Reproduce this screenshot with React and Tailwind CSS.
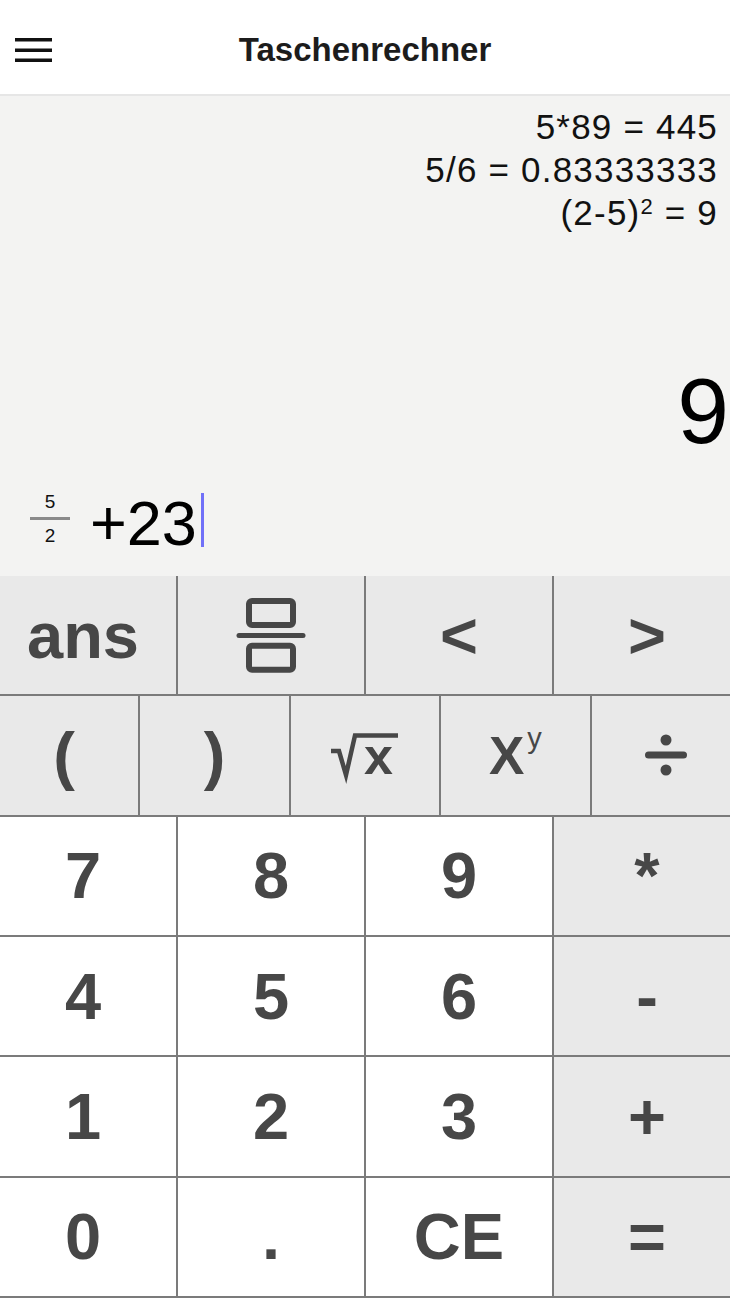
const font = "font-['Liberation_Sans',Arial,sans-serif]";

function Hamburger() {
  return (
    <svg width="37" height="24" viewBox="0 0 37 24">
      <rect x="0" y="0" width="37" height="3.5" fill="#111" />
      <rect x="0" y="10.5" width="37" height="3.5" fill="#111" />
      <rect x="0" y="20.5" width="37" height="3.5" fill="#111" />
    </svg>
  );
}

function FractionIcon() {
  return (
    <svg width="70" height="75" viewBox="0 0 70 75" fill="none" stroke="#474747">
      <rect x="13" y="3" width="44" height="24" rx="3" strokeWidth="6" />
      <line x1="3" y1="37.5" x2="67" y2="37.5" strokeWidth="5" strokeLinecap="round" />
      <rect x="13" y="47.7" width="44" height="24" rx="3" strokeWidth="6" />
    </svg>
  );
}

function SqrtIcon() {
  return (
    <svg width="68" height="60" viewBox="0 -8 68 60">
      <path d="M0 18 L8 18 L15 42 L24 2.5 L67 2.5" fill="none" stroke="#474747" strokeWidth="4.5" strokeLinejoin="miter" />
      <text x="33" y="41" fontSize="52" fontWeight="700" fill="#474747" fontFamily="Liberation Sans, Arial, sans-serif">
        x
      </text>
    </svg>
  );
}

function DivideIcon() {
  return (
    <svg width="42" height="42" viewBox="0 0 42 42" fill="#474747">
      <circle cx="21" cy="6" r="5.5" />
      <rect x="0" y="17.5" width="42" height="7" rx="3.5" />
      <circle cx="21" cy="36" r="5.5" />
    </svg>
  );
}

function Key({ children, gray }) {
  return (
    <div
      className={`flex items-center justify-center border-r-2 border-[#7b7b7b] text-[65px] font-bold leading-none text-[#474747] ${
        gray ? "bg-[#e9e9e9]" : "bg-white"
      }`}
    >
      {children}
    </div>
  );
}

export default function App() {
  return (
    <div className={`flex h-[1299px] w-[730px] flex-col overflow-hidden bg-white ${font}`}>
      {/* header */}
      <div className="grid h-[96px] grid-cols-[1fr_auto_1fr] items-center border-b-2 border-[#e6e6e6] px-[15px] pt-[6px]">
        <div>
          <Hamburger />
        </div>
        <h1 className="text-[33px] font-bold text-[#1c1c1c]">Taschenrechner</h1>
        <div />
      </div>

      {/* display */}
      <div className="flex h-[480px] flex-col bg-[#f3f3f2]">
        <div className="pr-[12px] pt-[9px] text-right text-[35px] leading-[43px] tracking-[1.2px] text-[#111]">
          <div>5*89 = 445</div>
          <div>5/6 = 0.83333333</div>
          <div>
            (2-5)<sup className="text-[22px]">2</sup> = 9
          </div>
        </div>
        <div className="flex-1" />
        <div className="pr-[1px] text-right text-[93px] leading-[90px] text-black">9</div>
        <div className="mb-[29px] mt-[37px] flex h-[54px] items-start">
          <div className="ml-[30px] flex w-[40px] flex-col items-center text-[19px] leading-[18px] text-[#111]">
            <span>5</span>
            <span className="mt-[6px] h-[3px] w-[40px] bg-[#8a8a8a]" />
            <span className="mt-[7px]">2</span>
          </div>
          <span className="ml-[20px] text-[63px] leading-[60px] text-black">+23</span>
          <span className="ml-[4px] h-[54px] w-[3px] bg-[#7070f8]" />
        </div>
      </div>

      {/* keypad */}
      <div className="flex-1 overflow-hidden">
        <div className="ml-[-10px] flex h-full w-[752px] flex-col">
          <div className="grid flex-1 grid-cols-4 border-b-2 border-[#7b7b7b]">
            <Key gray>ans</Key>
            <Key gray>
              <FractionIcon />
            </Key>
            <Key gray>&lt;</Key>
            <Key gray>&gt;</Key>
          </div>
          <div className="grid flex-1 grid-cols-5 border-b-2 border-[#7b7b7b]">
            <Key gray>(</Key>
            <Key gray>)</Key>
            <Key gray>
              <SqrtIcon />
            </Key>
            <Key gray>
              <span className="flex items-start">
                <span className="text-[53px]">X</span>
                <span className="ml-[3px] mt-[-5px] text-[29px] font-normal">y</span>
              </span>
            </Key>
            <Key gray>
              <DivideIcon />
            </Key>
          </div>
          <div className="grid flex-1 grid-cols-4 border-b-2 border-[#7b7b7b]">
            <Key>7</Key>
            <Key>8</Key>
            <Key>9</Key>
            <Key gray>*</Key>
          </div>
          <div className="grid flex-1 grid-cols-4 border-b-2 border-[#7b7b7b]">
            <Key>4</Key>
            <Key>5</Key>
            <Key>6</Key>
            <Key gray>-</Key>
          </div>
          <div className="grid flex-1 grid-cols-4 border-b-2 border-[#7b7b7b]">
            <Key>1</Key>
            <Key>2</Key>
            <Key>3</Key>
            <Key gray>+</Key>
          </div>
          <div className="grid flex-1 grid-cols-4 border-b-2 border-[#7b7b7b]">
            <Key>0</Key>
            <Key>.</Key>
            <Key>CE</Key>
            <Key gray>=</Key>
          </div>
          <div className="h-[1px]" />
        </div>
      </div>
    </div>
  );
}
